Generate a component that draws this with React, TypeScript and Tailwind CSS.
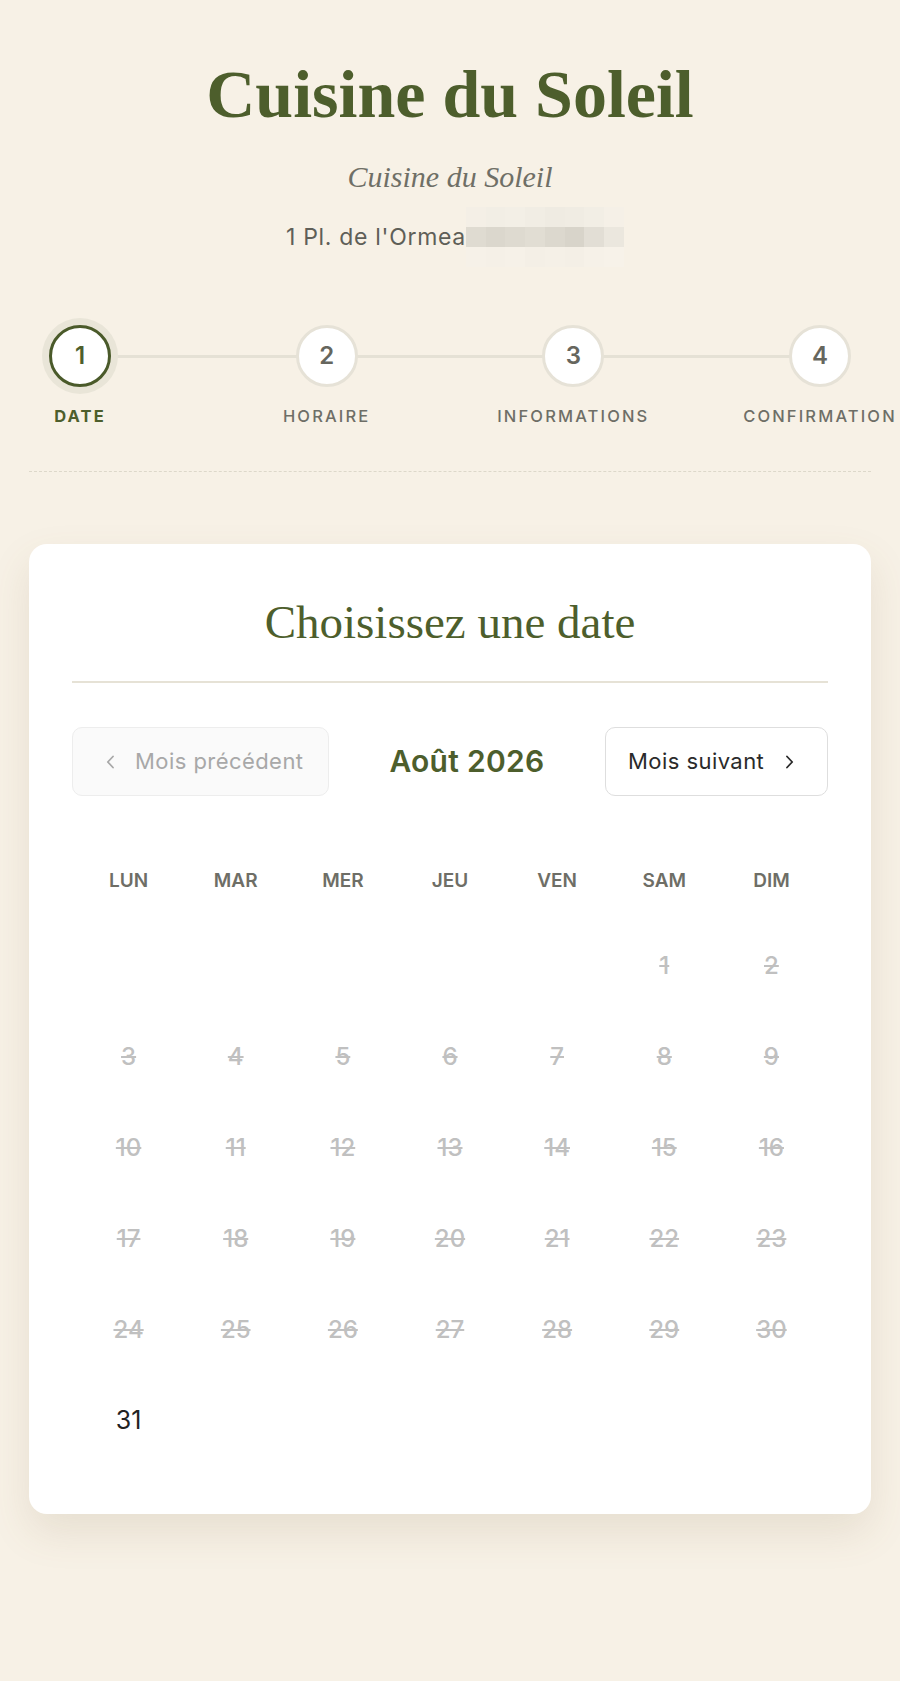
import React from 'react';

const steps = [
  { n: 1, label: 'DATE' },
  { n: 2, label: 'HORAIRE' },
  { n: 3, label: 'INFORMATIONS' },
  { n: 4, label: 'CONFIRMATION' },
];

const weekdays = ['LUN', 'MAR', 'MER', 'JEU', 'VEN', 'SAM', 'DIM'];

// pixelated (blurred) part of the address
const blurCells = [
  'bg-[#f4efe6]', 'bg-[#f2eee5]', 'bg-[#f3efe6]', 'bg-[#f1ede4]', 'bg-[#efebe2]', 'bg-[#f0ece3]', 'bg-[#f2eee5]', 'bg-[#f5f0e7]',
  'bg-[#dfdbd1]', 'bg-[#dbd7cd]', 'bg-[#dedad0]', 'bg-[#e1ddd3]', 'bg-[#dcd8ce]', 'bg-[#d8d4ca]', 'bg-[#e2ded5]', 'bg-[#ebe7de]',
  'bg-[#f6f1e8]', 'bg-[#f5f0e7]', 'bg-[#f6f1e8]', 'bg-[#f4efe6]', 'bg-[#f5f0e7]', 'bg-[#f4efe6]', 'bg-[#f6f1e8]', 'bg-[#f7f2e9]',
];

const Chevron = ({ dir }: { dir: 'left' | 'right' }) => (
  <svg width="9" height="14" viewBox="0 0 9 14" fill="none" className="shrink-0">
    <path
      d={dir === 'left' ? 'M7 1.5 1.8 7 7 12.5' : 'M2 1.5 7.2 7 2 12.5'}
      stroke="currentColor"
      strokeWidth="1.8"
      strokeLinecap="round"
      strokeLinejoin="round"
    />
  </svg>
);

const App: React.FC = () => {
  const days: (number | null)[] = [null, null, null, null, null];
  for (let i = 1; i <= 31; i++) days.push(i);

  return (
    <div className="min-h-screen bg-[#f7f1e6] font-['Inter',sans-serif] pb-[160px]">
      <header className="pt-[57px] flex flex-col items-center">
        <h1 className="font-['Liberation_Serif',serif] font-bold text-[68px] leading-[75px] text-[#4d5e2c]">
          Cuisine du Soleil
        </h1>
        <p className="mt-[27px] font-['Liberation_Serif',serif] italic text-[30px] leading-[36px] text-[#6f6f66]">
          Cuisine du Soleil
        </p>
        <div className="mt-[12px] flex items-center h-[60px] pl-[10px]">
          <span className="text-[23px] leading-[26px] text-[#5f5f58] tracking-[0.03em]">1 Pl. de l'Ormea</span>
          <div className="grid grid-cols-8 w-[158px] h-[60px]">
            {blurCells.map((c, i) => (
              <div key={i} className={c} />
            ))}
          </div>
        </div>
      </header>

      <div className="mt-[58px] px-[28px]">
        <div className="relative flex justify-between">
          <div className="absolute left-[52px] right-[52px] top-[30px] h-[3px] bg-[#e5e1d5]" />
          {steps.map((s) => (
            <div key={s.n} className="relative w-[104px] flex flex-col items-center">
              <div
                className={
                  s.n === 1
                    ? 'h-[62px] w-[62px] rounded-full bg-white border-[3px] border-[#4a5a2a] shadow-[0_0_0_7px_#e9e5d8] flex items-center justify-center text-[24px] font-semibold text-[#4d5e2c]'
                    : 'h-[62px] w-[62px] rounded-full bg-white border-[3px] border-[#e6e2d7] flex items-center justify-center text-[24px] font-semibold text-[#66665e]'
                }
              >
                {s.n}
              </div>
              <span
                className={
                  s.n === 1
                    ? 'mt-[19px] whitespace-nowrap text-[16.5px] leading-[20px] tracking-[0.13em] font-bold text-[#4d5e2c]'
                    : 'mt-[19px] whitespace-nowrap text-[16.5px] leading-[20px] tracking-[0.13em] font-medium text-[#6e6e66]'
                }
              >
                {s.label}
              </span>
            </div>
          ))}
        </div>
      </div>

      <div className="mx-[29px] mt-[45px] border-t border-dashed border-[#ddd8ca]" />

      <main className="mx-[29px] mt-[72px] bg-white rounded-[18px] shadow-[0_18px_40px_rgba(120,100,60,0.13)] px-[43px] pt-[48px] pb-[53px]">
        <h2 className="text-center font-['Liberation_Serif',serif] text-[47px] leading-[60px] text-[#4d5e2c]">
          Choisissez une date
        </h2>
        <div className="mt-[29px] h-[2px] bg-[#e6e2d6]" />

        <div className="mt-[44px] flex justify-between items-center h-[69px]">
          <button className="h-full w-[257px] rounded-[10px] border border-[#ededed] bg-[#fafafa] text-[#a8a8a8] flex items-center pl-[33px] gap-[20px] text-[22px]">
            <Chevron dir="left" />
            <span className="tracking-[0.02em]">Mois précédent</span>
          </button>
          <span className="text-[30px] font-semibold text-[#4d5e2c] tracking-[0.01em]">Août 2026</span>
          <button className="h-full w-[223px] rounded-[10px] border border-[#dedede] bg-white text-[#2a2a2a] flex items-center pl-[22px] gap-[21px] text-[22px]">
            <span className="tracking-[0.02em]">Mois suivant</span>
            <Chevron dir="right" />
          </button>
        </div>

        <div className="mt-[73px] grid grid-cols-7 px-[3px] text-center text-[19px] leading-[24px] font-semibold text-[#6e6e66]">
          {weekdays.map((d) => (
            <div key={d}>{d}</div>
          ))}
        </div>

        <div className="mt-[33px] grid grid-cols-7 gap-y-[11px] px-[3px]">
          {days.map((d, i) => (
            <div key={i} className="h-[80px] flex items-center justify-center">
              {d !== null && (
                <span
                  className={
                    d === 31
                      ? 'text-[25px] text-[#222222]'
                      : 'text-[24px] font-medium text-[#c0c0c0] line-through'
                  }
                >
                  {d}
                </span>
              )}
            </div>
          ))}
        </div>
      </main>
    </div>
  );
};

export default App;
